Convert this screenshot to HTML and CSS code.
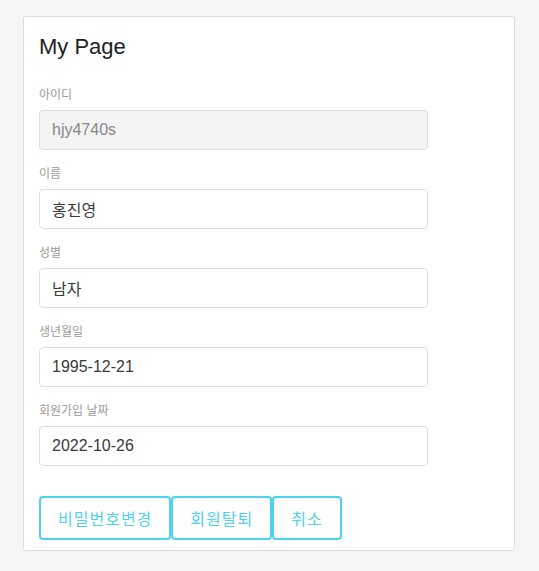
FILE: index.html
```html
<!DOCTYPE html>
<html lang="ko">
<head>
<meta charset="utf-8">
<title>My Page</title>
<link rel="stylesheet" href="styles.css">
</head>
<body>
<div class="card">
  <h1 class="title">My Page</h1>
  <div class="field">
    <label class="label">아이디</label>
    <input class="input" type="text" value="hjy4740s" disabled>
  </div>
  <div class="field">
    <label class="label">이름</label>
    <input class="input" type="text" value="홍진영">
  </div>
  <div class="field">
    <label class="label">성별</label>
    <input class="input" type="text" value="남자">
  </div>
  <div class="field">
    <label class="label">생년월일</label>
    <input class="input" type="text" value="1995-12-21">
  </div>
  <div class="field">
    <label class="label">회원가입 날짜</label>
    <input class="input" type="text" value="2022-10-26">
  </div>
  <div class="actions">
    <button class="btn" type="button">비밀번호변경</button>
    <button class="btn" type="button">회원탈퇴</button>
    <button class="btn" type="button">취소</button>
  </div>
</div>
</body>
</html>
```
FILE: styles.css
```css
* { box-sizing: border-box; }
html, body { margin: 0; padding: 0; }
body {
  background: #f5f5f5;
  font-family: "Liberation Sans", Arial, "Noto Sans CJK KR", sans-serif;
  color: #333;
  padding: 16px 24px 20px 23px;
}
.card {
  width: 492px;
  height: 535px;
  background: #fff;
  border: 1px solid #dcdcdc;
  border-radius: 3px;
  padding: 15px 15px 10px 15px;
}
.title {
  margin: 0 0 24px 0;
  font-size: 22px;
  line-height: 30px;
  font-weight: normal;
  color: #222;
}
.field {
  display: flex;
  flex-direction: column;
  margin-bottom: 15px;
}
.label {
  font-size: 12px;
  line-height: 18px;
  color: #9a9a9a;
  margin-bottom: 6px;
}
.input {
  width: 389px;
  height: 40px;
  border: 1px solid #dedede;
  border-radius: 4px;
  padding: 0 12px;
  font-family: "Liberation Sans", Arial, "Noto Sans CJK KR", sans-serif;
  font-size: 16px;
  color: #3a3a3a;
  background: #fff;
  outline: none;
}
.input:disabled {
  background: #f4f4f4;
  color: #888;
}
.actions {
  display: flex;
  margin-top: 30px;
}
.btn {
  height: 44px;
  padding: 0 17px;
  border: 2px solid #4fd2ee;
  border-radius: 4px;
  background: #fff;
  color: #4fd2ee;
  font-family: "Liberation Sans", Arial, "Noto Sans CJK KR", sans-serif;
  font-size: 16px;
  letter-spacing: 1px;
  cursor: pointer;
}
```
